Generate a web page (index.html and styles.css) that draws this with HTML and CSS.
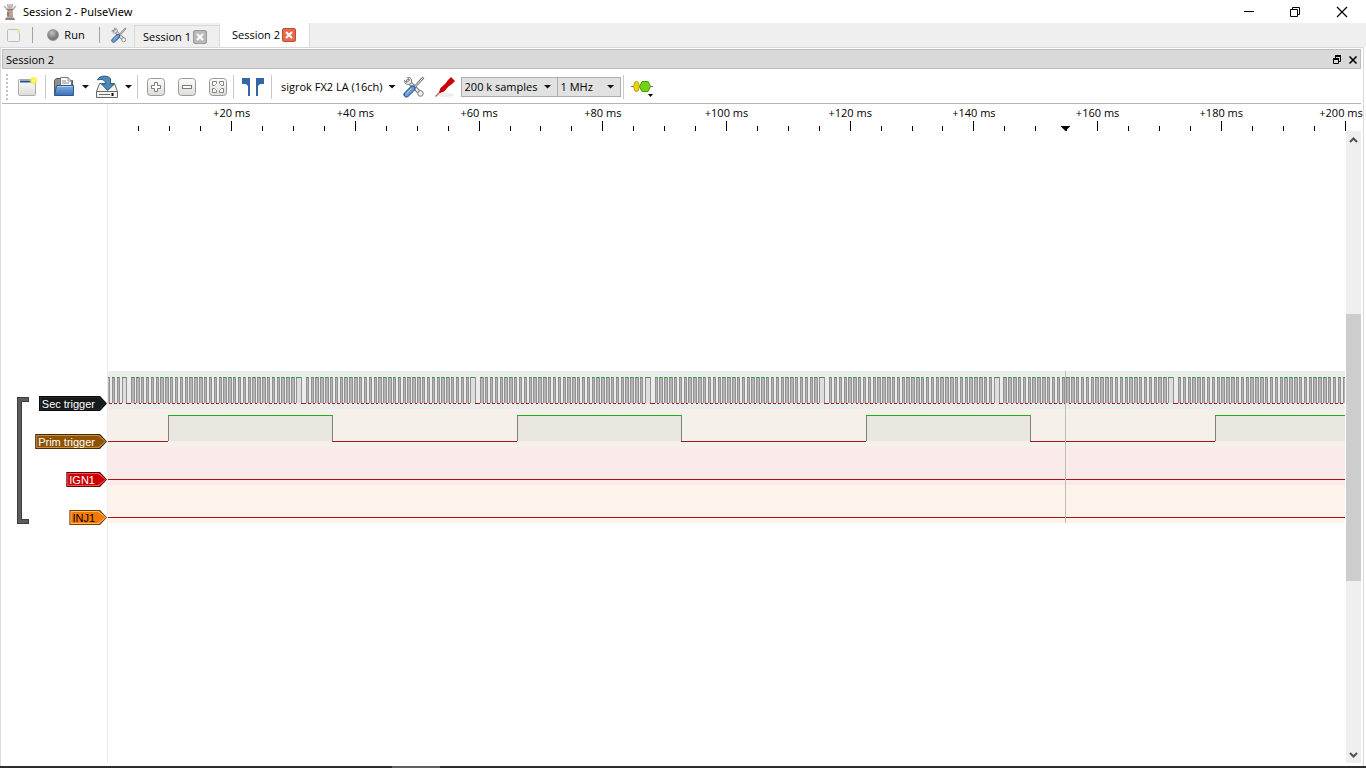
FILE: index.html
```html
<!DOCTYPE html>
<html lang="en">
<head>
<meta charset="utf-8">
<title>Session 2 - PulseView</title>
<link rel="stylesheet" href="styles.css">
</head>
<body>
<svg class="defs" aria-hidden="true">
  <defs>
    <linearGradient id="folder" x2="0" y2="1"><stop stop-color="#7fb0e4"/><stop offset="1" stop-color="#3a6fb5"/></linearGradient>
    <linearGradient id="paper" x2="0" y2="1"><stop stop-color="#fdfdfd"/><stop offset="1" stop-color="#dcdcda"/></linearGradient>
    <radialGradient id="ball" cx=".4" cy=".3"><stop stop-color="#c4c4c4"/><stop offset="1" stop-color="#7c7c7c"/></radialGradient>
    <radialGradient id="glow"><stop stop-color="#fffbb0"/><stop offset=".5" stop-color="#f5ee3c"/><stop offset="1" stop-color="#f5ee3c" stop-opacity="0"/></radialGradient>
    <symbol id="tools" viewBox="0 0 22 22">
      <path d="M5 5L17 17" stroke="#777b77" stroke-width="4" stroke-linecap="round"/>
      <path d="M5 5L17 17" stroke="#eeeeec" stroke-width="2" stroke-linecap="round"/>
      <path d="M1.500 4.500L4 6.500L6.500 4L4.500 1.500C8 1 9.500 4 8 7.500C5 9.500 1 8 1.500 4.500Z" fill="#f4f4f2" stroke="#777b77"/>
      <circle cx="17.500" cy="17.500" r="2.800" fill="#eeeeec" stroke="#777b77"/>
      <path d="M10 13L18 4L20.500 1.500" stroke="#777b77" stroke-width="2.600"/>
      <path d="M10 13L18 4L20 2" stroke="#eeeeec" stroke-width="1"/>
      <path d="M3.500 18.500L9.500 12.500" stroke="#28528c" stroke-width="6" stroke-linecap="round"/>
      <path d="M3.500 18.500L9.500 12.500" stroke="#6c9bd2" stroke-width="4" stroke-linecap="round"/>
      <path d="M3.500 17.500L8.500 12.500" stroke="#b5d0ee" stroke-width="1"/>
    </symbol>
  </defs>
</svg>

<header class="titlebar">
  <svg class="logo" width="14" height="18" viewBox="0 0 14 18">
    <path d="M5 6H9L9.500 14H4.500Z" fill="#b5aaa3" stroke="#857a74" stroke-width=".6"/>
    <path d="M4 6L1 3M5.500 5L4.500 1M8.500 5L9.500 1M10 6L13 3M7 5V1" stroke="#b4b4b4" stroke-width="1.600"/>
    <path d="M3.500 6.500H10.500" stroke="#a8695f" stroke-width="1.500"/><path d="M5 9V13" stroke="#5b5b5b"/>
    <path d="M7 8V14" stroke="#d9926c" stroke-width="1.200"/><path d="M3 14.500H11L12 17H2Z" fill="#8b8582"/>
  </svg>
  <h1 class="caption">Session 2 - PulseView</h1>
  <div class="window-buttons">
    <button aria-label="Minimize"><svg width="12" height="12" viewBox="0 0 12 12"><path d="M1 5H11V6H1Z"/></svg></button>
    <button aria-label="Restore"><svg width="12" height="12" viewBox="0 0 12 12" fill="none" stroke="#000"><path d="M1.500 3.500H8.500V10.500H1.500ZM3.500 3.500V1.500H10.500V8.500H8.500"/></svg></button>
    <button aria-label="Close"><svg width="12" height="12" viewBox="0 0 12 12"><path d="M1 1L11 11M11 1L1 11" stroke="#000" stroke-width="1.200"/></svg></button>
  </div>
</header>

<nav class="tabbar">
  <button class="new-tab" aria-label="New session"><svg width="14" height="15" viewBox="0 0 14 15"><rect x=".5" y="1.500" width="12" height="12" rx="1" fill="#f1f1f0" stroke="#bcbcba"/><circle cx="11.500" cy="3" r="2" fill="#f1e89c"/></svg></button>
  <i class="rule"></i>
  <button class="run"><svg width="12" height="12" viewBox="0 0 12 12"><circle cx="6" cy="6" r="5.500" fill="url(#ball)" stroke="#858585" stroke-width=".6"/></svg>Run</button>
  <i class="rule"></i>
  <button class="settings" aria-label="Settings"><svg width="16" height="16"><use href="#tools"/></svg></button>
  <div class="tab"><button>Session 1</button><button class="close" aria-label="Close Session 1"><svg width="8" height="8" viewBox="0 0 8 8"><path d="M1 1L7 7M7 1L1 7" stroke="#fff" stroke-width="2"/></svg></button></div>
  <div class="tab active"><button>Session 2</button><button class="close" aria-label="Close Session 2"><svg width="8" height="8" viewBox="0 0 8 8"><path d="M1 1L7 7M7 1L1 7" stroke="#fff" stroke-width="2"/></svg></button></div>
</nav>

<main class="dock">
  <div class="dock-title"><h2 class="caption">Session 2</h2>
    <button aria-label="Float"><svg width="10" height="10" viewBox="0 0 10 10" fill="none" stroke="#000"><path d="M3 1.500H9M3.500 1V4M8.500 1V6.500H6M1 4.500H7M1.500 4V8.500H6.500V4"/><path d="M3 1H9M1 4H7" stroke-width="2"/></svg></button>
    <button aria-label="Close"><svg width="10" height="10" viewBox="0 0 10 10"><path d="M1.500 1.500L8.500 8.500M8.500 1.500L1.500 8.500" stroke="#000" stroke-width="1.600"/></svg></button>
  </div>

  <div class="toolbar">
    <i class="grip"></i>
    <button class="new" aria-label="New view"><svg width="22" height="22" viewBox="0 0 22 22"><rect x="2.500" y="3.500" width="17" height="16" rx="1" fill="url(#paper)" stroke="#a9aba8"/><path d="M4 5.500H17" stroke="#25508b" stroke-width="2"/><circle cx="17.500" cy="4.500" r="4.500" fill="url(#glow)"/></svg></button>
    <i class="rule"></i>
    <button class="open" aria-label="Open"><svg width="22" height="22" viewBox="0 0 22 22"><path d="M1.500 19V4.500L3 2.500H8L9.500 4.500H19.500V11" fill="#8d918d" stroke="#555753"/><path d="M7.500 10V1.500H15L18.500 5V10" fill="#fff" stroke="#777"/><path d="M15 1.500V5H18M9 5H13M9 7H16" fill="none" stroke="#888"/><path d="M3.500 9.500H20.500V19.500H1.500Z" fill="url(#folder)" stroke="#2c5591"/><path d="M4.500 10.500H19.500" stroke="#b1d0f3"/></svg></button>
    <button class="drop" aria-label="Recent files"></button>
    <button class="save" aria-label="Save"><svg width="24" height="24" viewBox="0 0 24 24"><path d="M4.500 8.500H19.500L22.500 16.500V22.500H1.500V16.500Z" fill="#f3f3f2" stroke="#666964"/><path d="M1.500 16.500H22.500M4 19.500H15" stroke="#666964"/><path d="M17.500 18V21" stroke="#111" stroke-width="2"/><path d="M2.500 5C4 0 14 0 15.500 4V9H19.500L12.500 15.500L6.500 9H10.500C10.500 5 7 3.500 2.500 5Z" fill="#4d8ab9" stroke="#285e89"/></svg></button>
    <button class="drop" aria-label="Save options"></button>
    <i class="rule"></i>
    <button class="zoom" aria-label="Zoom in"><svg width="20" height="20" viewBox="0 0 20 20"><rect x="1.500" y="1.500" width="17" height="17" rx="3" fill="url(#paper)" stroke="#999b98"/><path d="M8.500 5.500H11.500V8.500H14.500V11.500H11.500V14.500H8.500V11.500H5.500V8.500H8.500Z" fill="#fff" stroke="#7c7c7c"/></svg></button>
    <button class="zoom" aria-label="Zoom out"><svg width="20" height="20" viewBox="0 0 20 20"><rect x="1.500" y="1.500" width="17" height="17" rx="3" fill="url(#paper)" stroke="#999b98"/><rect x="5.500" y="8.500" width="9" height="3" fill="#fff" stroke="#7c7c7c"/></svg></button>
    <button class="zoom" aria-label="Zoom to fit"><svg width="20" height="20" viewBox="0 0 20 20"><rect x="1.500" y="1.500" width="17" height="17" rx="3" fill="url(#paper)" stroke="#999b98"/><path d="M4.500 4.500H8.500V6.500L7.500 7.500L6.500 8.500H4.500ZM15.500 4.500H11.500V6.500L12.500 7.500L13.500 8.500H15.500ZM4.500 15.500H8.500V13.500L7.500 12.500L6.500 11.500H4.500ZM15.500 15.500H11.500V13.500L12.500 12.500L13.500 11.500H15.500Z" fill="#fff" stroke="#858585"/></svg></button>
    <i class="rule"></i>
    <button class="cursors" aria-label="Show cursors"><svg width="24" height="20" viewBox="0 0 24 20"><path d="M1 1H9V19H7V9L5 7H1ZM15 1H23V7H19L17 9V19H15Z" fill="#3465a4"/></svg></button>
    <i class="rule"></i>
    <button class="device">sigrok FX2 LA (16ch)</button>
    <button class="drop" aria-label="Choose device"></button>
    <button class="configure" aria-label="Configure device"><svg width="22" height="22"><use href="#tools"/></svg></button>
    <button class="probe" aria-label="Configure channels"><svg width="22" height="22" viewBox="0 0 22 22"><ellipse cx="12" cy="19" rx="8" ry="2" fill="#ededed"/><path d="M1.500 20.500L8 14" stroke="#b06060" stroke-width="1.200"/><path d="M5 16L6.500 12L11.500 7.500L14 4L17 1L21 5L18 8L14.500 10.500L10 15.500L6 17Z" fill="#cc0000"/></svg></button>
    <label class="combo samples"><select aria-label="Sample count"><option>200 k samples</option></select></label>
    <label class="combo rate"><select aria-label="Sample rate"><option>1 MHz</option></select></label>
    <i class="rule"></i>
    <button class="decoder" aria-label="Add protocol decoder"><svg width="24" height="22" viewBox="0 0 24 22"><path d="M1 10.500H23" stroke="#777"/><path d="M3.500 10.500L5 6L6.500 5.500L8 6L9.500 10.500L8 15L6.500 15.500L5 15Z" fill="#edd400" stroke="#c4a000"/><path d="M9.500 10.500L12 5.500H18L20.500 10.500L18 15.500H12Z" fill="#73d216" stroke="#4e9a06"/><path d="M18 18H23L20.500 21Z" fill="#000"/></svg></button>
  </div>

  <div class="trace-view">
    <div class="corner"></div>
    <svg class="ruler" id="ruler"></svg>
    <div class="channels">
      <svg class="bracket" width="13" height="128" viewBox="0 0 13 128"><path d="M13 3.500H3.500V125.500H13" fill="none" stroke="#3e3e3c" stroke-width="5"/><path d="M12 3.500H3.500V125.500H12" fill="none" stroke="#5b5d5a" stroke-width="3"/></svg>
      <ul class="names">
        <li><button class="tag black">Sec trigger</button></li>
        <li><button class="tag brown">Prim trigger</button></li>
        <li><button class="tag red">IGN1</button></li>
        <li><button class="tag orange">INJ1</button></li>
      </ul>
    </div>
    <div class="plot">
      <svg class="waves" viewBox="0 0 1237 152" preserveAspectRatio="none">
        <rect width="1237" height="38" fill="#ececec"/>
        <rect y="38" width="1237" height="38" fill="#f5f0ea"/>
        <rect y="76" width="1237" height="38" fill="#fbeaea"/>
        <rect y="114" width="1237" height="38" fill="#fef3ea"/>
        <g id="sec"></g>
        <g id="prim"></g>
        <rect y="108" width="1237" height="1" fill="#a81414"/>
        <rect y="146" width="1237" height="1" fill="#a81414"/>
        <rect x="957" width="1" height="152" fill="#bdbdbd"/>
      </svg>
    </div>
    <div class="scrollbar">
      <button aria-label="Scroll up"><svg width="9" height="6" viewBox="0 0 9 6"><path d="M1 5L4.500 1.500L8 5" fill="none" stroke="#505050" stroke-width="2"/></svg></button>
      <div class="track"><i class="thumb"></i></div>
      <button aria-label="Scroll down"><svg width="9" height="6" viewBox="0 0 9 6"><path d="M1 1L4.500 4.500L8 1" fill="none" stroke="#505050" stroke-width="2"/></svg></button>
    </div>
  </div>
</main>
<footer class="edge"><i></i></footer>
<script src="script.js"></script>
</body>
</html>
```

FILE: styles.css
```css
* { box-sizing: border-box; }
body {
  margin: 0;
  height: 100vh;
  display: flex;
  flex-direction: column;
  overflow: hidden;
  background: #fff;
  color: #000;
  font: 11px/14px "Open Sans", "Noto Sans", sans-serif;
}
button {
  display: flex;
  align-items: center;
  justify-content: center;
  margin: 0;
  padding: 0;
  border: 0;
  background: none;
  color: inherit;
  font: inherit;
  white-space: nowrap;
}
svg { display: block; flex: none; }
.defs { position: absolute; width: 0; height: 0; }
.caption { margin: 0; font: inherit; flex: 1; }

.titlebar { display: flex; align-items: center; height: 23px; padding-left: 3px; gap: 6px; flex: none; }
.titlebar .caption { font-family: "Noto Sans", sans-serif; }
.window-buttons { display: flex; height: 20px; }
.window-buttons button { width: 46px; }
.window-buttons button:last-child { width: 48px; }

.tabbar { display: flex; align-items: center; height: 24px; background: #efefef; flex: none; padding-left: 7px; }
.rule { width: 1px; height: 16px; background: #a2a2a2; flex: none; }
.tabbar .new-tab { margin-right: 11px; }
.run { width: 66px; gap: 5px; }
.settings { width: 34px; padding-left: 4px; }
.tab { display: flex; align-items: center; align-self: flex-end; gap: 2px; height: 22px; width: 86px; padding-left: 8px; border: 1px solid #d9d9d9; border-bottom: 0; }
.tab.active { height: 24px; width: 90px; padding-left: 12px; background: #fff; border-top: 0; border-left: 0; }
.close { width: 14px; height: 14px; border: 1px solid #999; border-radius: 2px; background: #b9b9b9; }
.active .close { background: #e36c4e; border-color: #c84b31; }

.dock { flex: 1; min-height: 0; display: flex; flex-direction: column; margin-right: 2px; padding: 1px 2px 3px 1px; border: 1px solid #d9d9d9; border-bottom: 0; }
.dock-title { display: flex; align-items: center; height: 20px; padding: 1px 2px 0 3px; gap: 6px; background: #d9d9d9; border: 1px solid #bcbcbc; flex: none; }

.toolbar { display: flex; align-items: center; height: 35px; flex: none; border-bottom: 1px solid #b5b5b5; padding: 1px 0 0 4px; }
.toolbar .rule { height: 24px; background: #c9c9c9; }
.grip { width: 2px; height: 26px; background: repeating-linear-gradient(#c4c4c4 0 2px, transparent 2px 4px); }
.new { width: 37px; }
.open { width: 34px; padding-left: 2px; }
.drop { width: 11px; height: 22px; }
.save { width: 32px; }
.drop::before, .combo::after { content: ""; width: 8px; height: 4px; background: #111; clip-path: polygon(0 0, 100% 0, 50% 100%); }
.save + .drop { margin-right: 3px; }
.zoom { width: 31px; }
.rule + .zoom { margin-left: 2px; }
.cursors { width: 37px; padding-left: 1px; }
.device { padding-left: 9px; padding-right: 4px; }
.configure { width: 32px; }
.probe { width: 31px; }
.combo { display: grid; align-items: center; width: 97px; height: 20px; border: 1px solid #adadad; background: #e1e1e1; }
.combo select { grid-area: 1 / 1; width: 100%; height: 18px; padding: 0 3px; border: 0; background: none; appearance: none; color: #000; font: inherit; }
.combo::after { grid-area: 1 / 1; justify-self: end; margin-right: 5px; pointer-events: none; }
.rate { width: 64px; margin-left: -1px; margin-right: 2px; }
.decoder { width: 36px; }

.trace-view { flex: 1; min-height: 0; display: grid; grid-template-columns: 105px minmax(0, 1fr) 16px; grid-template-rows: 27px minmax(0, 1fr); }
.corner { border-right: 1px solid #ececec; }
.ruler { width: 100%; height: 27px; overflow: visible; }
.ruler text { text-anchor: middle; }
.channels { grid-column: 1; grid-row: 2; display: flex; align-items: center; justify-content: space-between; padding-top: 4px; padding-left: 14px; border-right: 1px solid #ececec; }
.corner, .channels { margin-right: -1px; }
.bracket { margin-top: 22px; }
.names { list-style: none; margin: 0; padding: 0; }
.names li { height: 38px; display: flex; align-items: flex-end; justify-content: flex-end; }
.tag { position: relative; z-index: 0; height: 15px; padding: 1px 12px 0 3px; color: #fff; font-family: "Liberation Sans", Arial, sans-serif; }
.tag, .tag::before, .tag::after { clip-path: polygon(0 0, calc(100% - 7px) 0, 100% 50%, calc(100% - 7px) 100%, 0 100%); }
.tag::before, .tag::after { content: ""; position: absolute; z-index: -1; inset: 1px; }
.tag::after { inset: 2px; }
.black { background: #080909; } .black::before { background: #23292b; } .black::after { background: #16191a; }
.brown { background: #472901; } .brown::before { background: #c98d3d; } .brown::after { background: #8f5202; }
.red { background: #660000; } .red::before { background: #f05555; } .red::after { background: #cc0000; }
.orange { background: #7a3d00; color: #000; } .orange::before { background: #ffb866; } .orange::after { background: #f57900; }

.plot { grid-column: 2; grid-row: 2; display: flex; align-items: center; margin-left: 1px; }
.ruler { grid-column: 2; grid-row: 1; margin-left: 1px; width: calc(100% - 1px); }
.waves { width: 100%; height: 152px; }
.scrollbar { grid-column: 3; grid-row: 2; display: flex; flex-direction: column; margin-left: 1px; background: #efefef; }
.scrollbar button { height: 17px; flex: none; }
.track { flex: 1; display: flex; flex-direction: column; }
.track::before { content: ""; flex: 166; }
.track::after { content: ""; flex: 165; }
.thumb { flex: 267; background: #cdcdcd; }
.edge { height: 2px; flex: none; background: #2d2d30; padding-left: 392px; }
.edge i { display: block; width: 48px; height: 2px; background: #606062; }
```

FILE: script.js
```js
const NS = "http://www.w3.org/2000/svg";
function add(parent, name, attrs, text) {
  const el = document.createElementNS(NS, name);
  for (const key in attrs) el.setAttribute(key, attrs[key]);
  if (text) el.textContent = text;
  parent.appendChild(el);
}

// Time ruler: one minor tick every 5 ms, one label every 20 ms.
const ruler = document.getElementById("ruler");
for (let ms = 5; ms <= 200; ms += 5) {
  const x = ms / 2 + "%";
  const major = ms % 20 === 0;
  add(ruler, "line", { x1: x, x2: x, y1: major ? 17 : 22, y2: 27, stroke: "#000", "shape-rendering": "crispEdges" });
  if (major) add(ruler, "text", { x: x, y: 13, dx: ms === 200 ? -4 : 0 }, "+" + ms + " ms");
}
const marker = document.createElementNS(NS, "svg");
marker.setAttribute("x", "77.4%");
marker.setAttribute("overflow", "visible");
add(marker, "path", { d: "M-5 22H5L0 27Z" });
ruler.appendChild(marker);

function box(x1, y1, x2, y2) {
  return `M${x1} ${y1}H${x2}V${y2}H${x1}Z`;
}

// Draws the high intervals of a logic channel; everything between them is low.
// Intervals wider than a regular tooth use the wide fill.
function drawLogic(id, highs, top, bottom, fill, wideFill, edge) {
  const group = document.getElementById(id);
  let narrow = "", wide = "", high = "", low = "", edges = "", last = 0;
  for (const [a, b] of highs) {
    if (b - a > 3) wide += box(a, top, b, bottom);
    else narrow += box(a, top, b, bottom);
    high += box(a, top, b, top + 1);
    if (a > last) low += box(last, bottom, a, bottom + 1);
    if (a > 0) edges += box(a, top, a + 1, bottom);
    if (b < 1237) edges += box(b, top, b + 1, bottom);
    last = b;
  }
  if (last < 1237) low += box(last, bottom, 1237, bottom + 1);
  add(group, "path", { d: narrow, fill: fill });
  add(group, "path", { d: wide, fill: wideFill });
  add(group, "path", { d: edges, fill: edge });
  add(group, "path", { d: high, fill: "#22ac22" });
  add(group, "path", { d: low, fill: "#a81414" });
}

// Toothed wheel: 34 regular teeth, then a long tooth and a long gap.
const teeth = [];
const pitch = 4.845;
for (let start = 23.3 - pitch * 36; start < 1237; start += pitch * 36) {
  for (let i = 0; i < 35; i++) {
    const a = Math.round(start + i * pitch);
    const b = Math.round(start + i * pitch + (i === 34 ? pitch : pitch / 2));
    if (b > 0 && a < 1237) teeth.push([Math.max(a, 0), Math.min(b, 1237)]);
  }
}
drawLogic("sec", teeth, 6, 32, "#b4b4b4", "#dedede", "#929292");
drawLogic("prim", [[60, 224], [409, 573], [758, 922], [1107, 1237]], 44, 70, "#e8e6df", "#e8e6df", "#808080");
```
